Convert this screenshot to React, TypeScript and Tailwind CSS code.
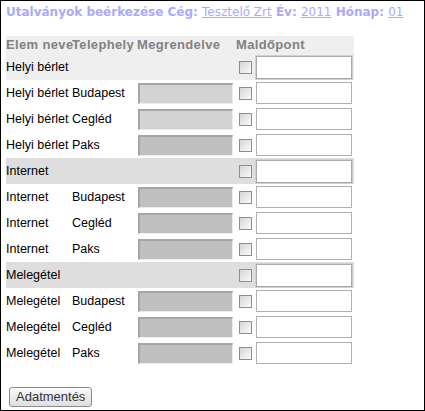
import React from "react";

type Row = { name: string; site: string; shade: "light" | "dark" };

const groups: { name: string; bg: string; rows: Row[] }[] = [
  {
    name: "Helyi bérlet",
    bg: "bg-[#efefef]",
    rows: [
      { name: "Helyi bérlet", site: "Budapest", shade: "light" },
      { name: "Helyi bérlet", site: "Cegléd", shade: "light" },
      { name: "Helyi bérlet", site: "Paks", shade: "dark" },
    ],
  },
  {
    name: "Internet",
    bg: "bg-[#dedede]",
    rows: [
      { name: "Internet", site: "Budapest", shade: "dark" },
      { name: "Internet", site: "Cegléd", shade: "dark" },
      { name: "Internet", site: "Paks", shade: "dark" },
    ],
  },
  {
    name: "Melegétel",
    bg: "bg-[#dedede]",
    rows: [
      { name: "Melegétel", site: "Budapest", shade: "dark" },
      { name: "Melegétel", site: "Cegléd", shade: "dark" },
      { name: "Melegétel", site: "Paks", shade: "dark" },
    ],
  },
];

const Check = () => (
  <div className="ml-[3px] w-[13px] h-[13px] border border-[#8e8e8e] bg-gradient-to-br from-[#d6d6d6] to-[#fbfbfb]" />
);

const App = () => {
  return (
    <div className="w-[425px] h-[411px] border border-black bg-white font-['Liberation_Sans',Arial,sans-serif] text-[12.5px] text-black">
      <div className="pl-[5px] pt-[3px] leading-[16px] font-['DejaVu_Sans',Verdana,sans-serif] text-[12px] text-[#aaaaf8] font-bold whitespace-nowrap">
        Utalványok beérkezése Cég: <span className="underline font-normal">Tesztelő Zrt</span> Év:{" "}
        <span className="underline font-normal">2011</span> Hónap: <span className="underline font-normal">01</span>
      </div>

      <div className="ml-[5px] mt-[16px] w-[348px]">
        <div className="flex items-center h-[18px] bg-[#efefef] font-bold text-[13px] tracking-[0.35px] text-[#828282] whitespace-nowrap">
          <div className="w-[66px]">Elem neve</div>
          <div className="w-[65px]">Telephely</div>
          <div className="w-[99px]">Megrendelve</div>
          <div>Maldőpont</div>
        </div>

        {groups.map((g) => (
          <div key={g.name}>
            <div className={`flex items-center h-[26px] ${g.bg}`}>
              <div className="w-[230px]">{g.name}</div>
              <div className="w-[19px]">
                <Check />
              </div>
              <input className="ml-px w-[96px] h-[23px] border border-[#a9a9a9] bg-white outline outline-1 outline-[#d0d0d0]" />
            </div>
            {g.rows.map((r) => (
              <div key={r.name + r.site} className="flex items-center h-[26px] whitespace-nowrap">
                <div className="w-[66px]">{r.name}</div>
                <div className="w-[65px]">{r.site}</div>
                <div className="w-[99px]">
                  <div
                    className={`ml-px w-[95px] h-[21px] border-t-2 border-l-2 border-r border-b border-t-[#a6a6a6] border-l-[#a6a6a6] border-r-[#ececec] border-b-[#ececec] ${
                      r.shade === "light" ? "bg-[#d3d3d3]" : "bg-[#c0c0c0]"
                    }`}
                  />
                </div>
                <div className="w-[19px]">
                  <Check />
                </div>
                <input className="ml-px w-[96px] h-[22px] border border-[#b0b0b0] bg-white" />
              </div>
            ))}
          </div>
        ))}
      </div>

      <button className="ml-[8px] mt-[21px] h-[20px] px-[6px] rounded-[3px] border border-[#8c8c8c] bg-gradient-to-b from-[#fafafa] to-[#dedede] text-[13px] leading-[16px] text-[#333]">
        Adatmentés
      </button>
    </div>
  );
};

export default App;
